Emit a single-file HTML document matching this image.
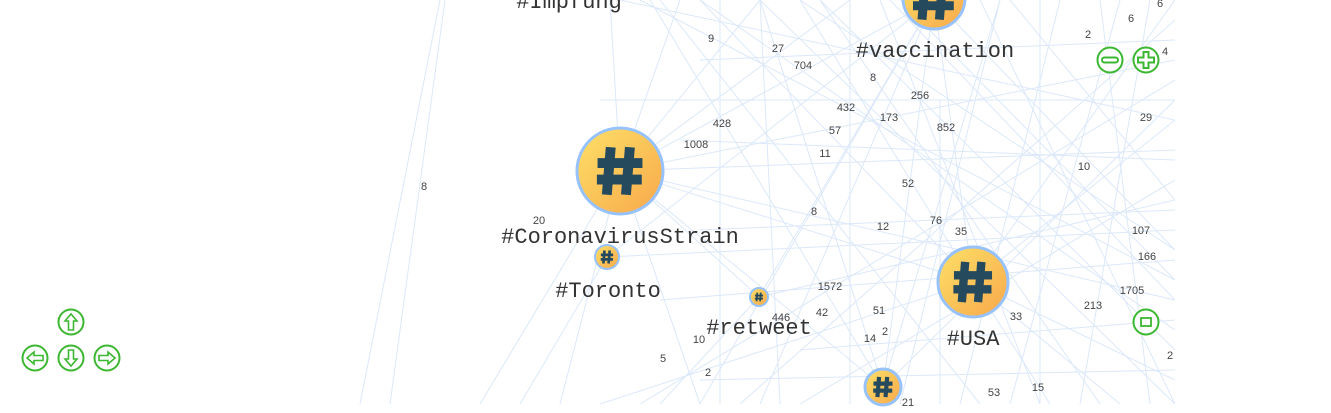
<!DOCTYPE html>
<html><head><style>
html,body{margin:0;padding:0;background:#fff;width:1331px;height:413px;overflow:hidden}
svg{position:absolute;left:0;top:0}
text{font-family:"Liberation Sans",sans-serif}
.l text{font-family:"Liberation Mono",monospace;font-size:22px;fill:#333}
.n text{font-size:11px;fill:#444}
</style></head><body>
<svg width="1331" height="413" viewBox="0 0 1331 413">
<defs>
<clipPath id="c"><rect x="0" y="0" width="1175" height="404"/></clipPath>
<linearGradient id="g" x1="0" y1="0" x2="1" y2="1"><stop offset="0" stop-color="#fde068"/><stop offset="1" stop-color="#f8a84a"/></linearGradient>
<g id="h"><path d="M-0.28,-0.72 L-0.4,0.72 M0.3,-0.72 L0.18,0.72 M-0.68,-0.24 L0.68,-0.24 M-0.7,0.26 L0.66,0.26" stroke="#254a5e" stroke-width="0.3" fill="none"/></g>
</defs>
<g clip-path="url(#c)" stroke="#c5d9f5" stroke-width="1" fill="none" opacity="0.6">
<path d="M440,0 L360,404 M445,0 L390,404 M610,0 L620,171 M620,171 L934,0 M620,171 L1175,60 M620,171 L1175,150 M620,171 L1175,300 M620,171 L973,282 M620,171 L883,387 M620,171 L700,404 M620,171 L560,404 M620,171 L480,404 M620,171 L760,0 M620,171 L850,0 M620,171 L680,0 M934,0 L973,282 M934,0 L883,387 M934,0 L1175,250 M934,0 L700,404 M934,0 L760,404 M973,282 L1175,0 M973,282 L1175,120 M973,282 L1175,380 M973,282 L700,0 M973,282 L800,0 M973,282 L600,404 M973,282 L1050,404 M973,282 L1120,404 M883,387 L1175,100 M883,387 L1000,0 M883,387 L760,0 M883,387 L650,0 M759,297 L934,0 M759,297 L1175,200 M759,297 L660,404 M759,297 L620,171 M607,257 L934,0 M607,257 L1175,230 M607,257 L520,404 M700,0 L1175,330 M760,0 L1175,404 M820,0 L1100,404 M880,0 L1040,404 M1000,0 L900,404 M1060,0 L960,404 M1120,0 L1010,404 M1175,20 L740,404 M1175,80 L640,404 M1175,180 L800,404 M660,0 L980,404 M720,0 L720,404 M760,0 L780,404 M1040,0 L1040,404 M1100,0 L1150,404 M640,0 L1175,280 M700,60 L1175,40 M600,100 L1175,100 M680,140 L1175,160 M700,230 L1175,210 M660,300 L1175,260 M800,350 L1175,320 M700,380 L1175,370 M980,0 L1175,404 M1150,0 L1080,404 M850,0 L850,404 M940,100 L940,404 M1010,0 L1175,200 M890,0 L1175,300 M620,0 L1175,120 M800,0 L1175,250 M1175,280 L900,0 M1175,350 L820,0"/>
</g>
<g class="n" text-anchor="middle">
<text x="711" y="42">9</text><text x="778" y="52">27</text><text x="803" y="69">704</text><text x="873" y="81">8</text><text x="920" y="99">256</text><text x="846" y="111">432</text><text x="889" y="121">173</text><text x="946" y="131">852</text><text x="835" y="134">57</text><text x="722" y="127">428</text><text x="696" y="148">1008</text><text x="825" y="157">11</text><text x="1084" y="170">10</text><text x="908" y="187">52</text><text x="424" y="190">8</text><text x="814" y="215">8</text><text x="539" y="224">20</text><text x="936" y="224">76</text><text x="883" y="230">12</text><text x="961" y="235">35</text><text x="1141" y="234">107</text><text x="1147" y="260">166</text><text x="830" y="290">1572</text><text x="1132" y="294">1705</text><text x="1093" y="309">213</text><text x="781" y="321">446</text><text x="822" y="316">42</text><text x="879" y="314">51</text><text x="1016" y="320">33</text><text x="885" y="335">2</text><text x="699" y="343">10</text><text x="870" y="342">14</text><text x="663" y="362">5</text><text x="1170" y="359">2</text><text x="708" y="376">2</text><text x="994" y="396">53</text><text x="1038" y="391">15</text><text x="908" y="406">21</text><text x="1088" y="38">2</text><text x="1131" y="22">6</text><text x="1160" y="7">6</text><text x="1165" y="55">4</text><text x="1146" y="121">29</text>
</g>
<g stroke="#97c2fc" stroke-width="3">
<circle cx="934" cy="-2" r="31" fill="url(#g)"/>
<circle cx="620" cy="171" r="43" fill="url(#g)"/>
<circle cx="607" cy="257" r="12" fill="url(#g)" stroke-width="2"/>
<circle cx="759" cy="297" r="9" fill="url(#g)" stroke-width="2"/>
<circle cx="973" cy="282" r="35" fill="url(#g)"/>
<circle cx="883" cy="387" r="18" fill="url(#g)"/>
</g>
<use href="#h" transform="translate(934,-2) scale(30)"/>
<use href="#h" transform="translate(620,171) scale(33)"/>
<use href="#h" transform="translate(607,257) scale(9)"/>
<use href="#h" transform="translate(759,297) scale(6)"/>
<use href="#h" transform="translate(973,282) scale(28)"/>
<use href="#h" transform="translate(883,387) scale(14)"/>
<g class="l" text-anchor="middle">
<text x="569" y="8">#Impfung</text>
<text x="935" y="57">#vaccination</text>
<text x="620" y="243">#CoronavirusStrain</text>
<text x="608" y="297">#Toronto</text>
<text x="759" y="334">#retweet</text>
<text x="973" y="345">#USA</text>
</g>
<g stroke="#3cb731" stroke-width="2" fill="#fff">
<circle cx="1110" cy="60" r="12.5"/><circle cx="1146" cy="60" r="12.5"/><circle cx="1146" cy="322" r="12.5"/>
<circle cx="71" cy="322" r="12.5"/><circle cx="35" cy="358" r="12.5"/><circle cx="71" cy="358" r="12.5"/><circle cx="107" cy="358" r="12.5"/>
<rect x="1102" y="57.5" width="16" height="5" rx="2.5"/>
<path d="M1143.5,52 h5 v5.5 h5.5 v5 h-5.5 v5.5 h-5 v-5.5 h-5.5 v-5 h5.5z"/>
<rect x="1141" y="318" width="10" height="8" stroke-width="1.8"/>
<path d="M71,314 l6,7 h-3.5 v9 h-5 v-9 h-3.5z" stroke-width="1.6"/>
<path d="M71,366 l6,-7 h-3.5 v-9 h-5 v9 h-3.5z" stroke-width="1.6"/>
<path d="M27,358 l7,-6 v3.5 h9 v5 h-9 v3.5z" stroke-width="1.6"/>
<path d="M115,358 l-7,-6 v3.5 h-9 v5 h9 v3.5z" stroke-width="1.6"/>
</g>
</svg>
</body></html>
